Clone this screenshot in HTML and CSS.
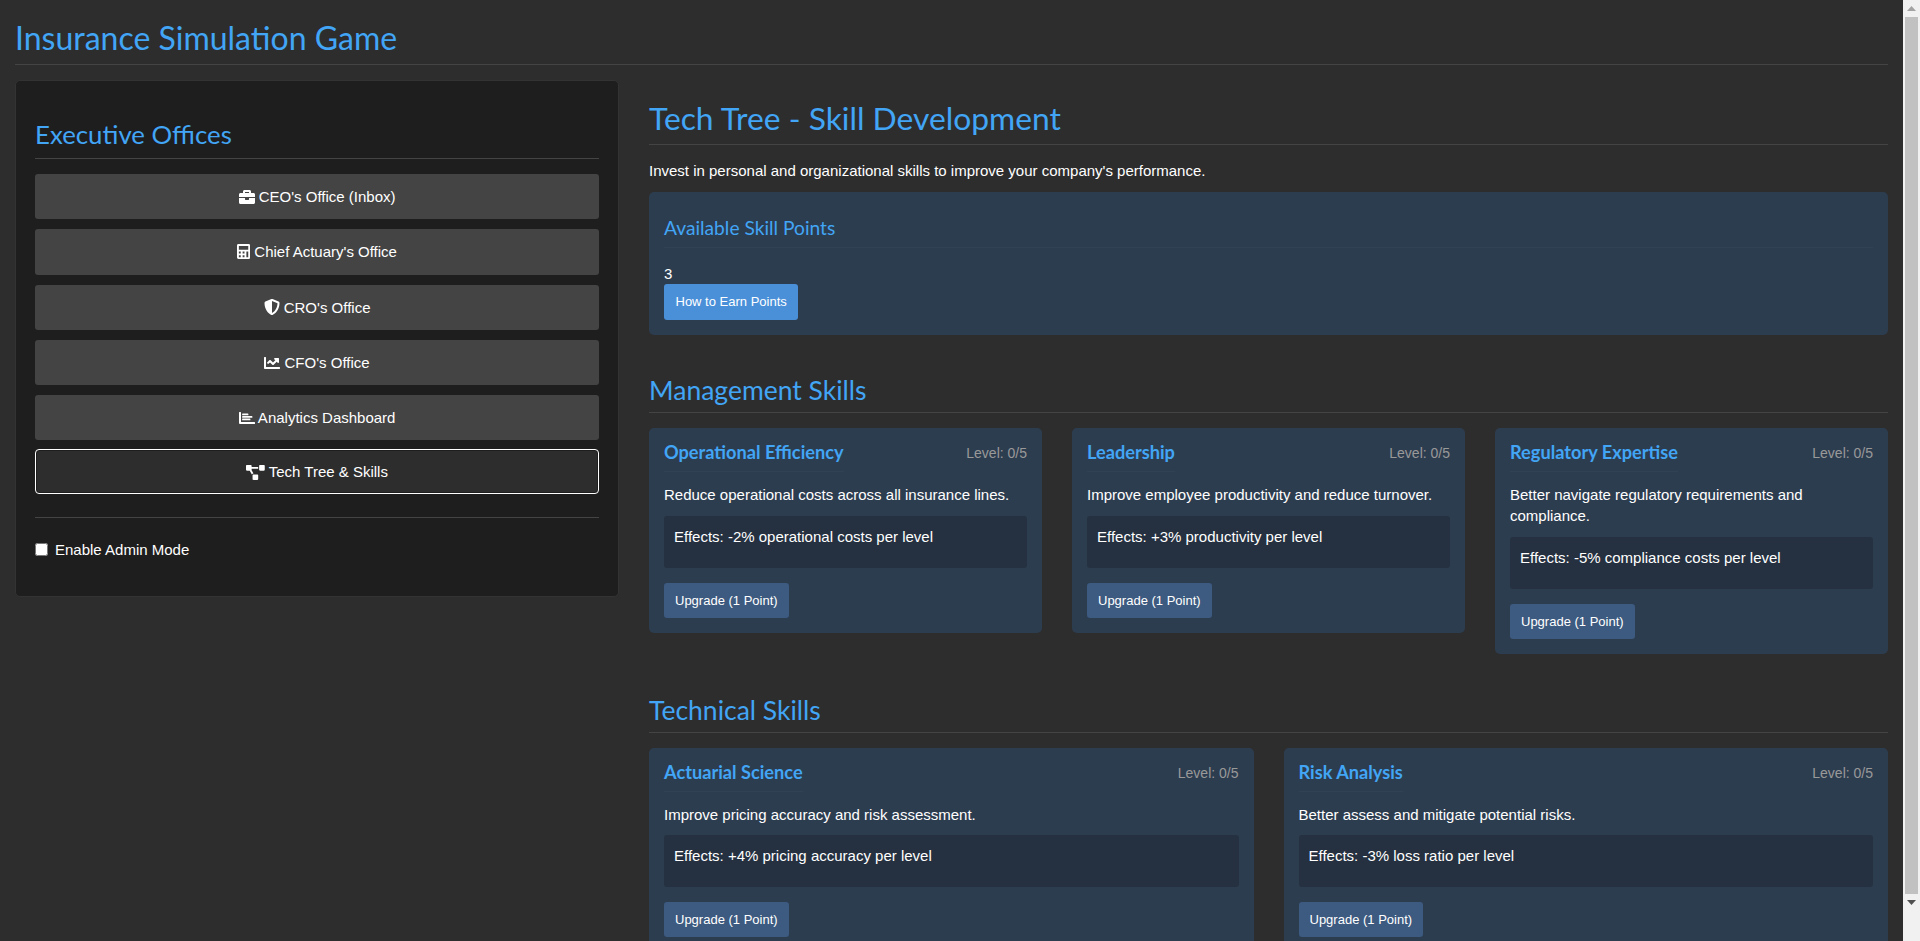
FILE: index.html
```html
<!DOCTYPE html>
<html>
<head>
    <title>Insurance Simulation Game</title>
    <link rel="stylesheet" href="styles.css">
</head>
<body>
    <h1 class="game-title">Insurance Simulation Game</h1>
    <div class="layout">
        <div class="sidebar">
            <h2 class="sidebar-title">Executive Offices</h2>
            <button class="office-btn">
                <svg class="icon" viewBox="0 0 512 512"><path d="M320 336c0 8.84-7.16 16-16 16h-96c-8.84 0-16-7.16-16-16v-48H0v144c0 25.6 22.4 48 48 48h416c25.6 0 48-22.4 48-48V288H320v48zm144-208h-80V80c0-25.6-22.4-48-48-48H176c-25.6 0-48 22.4-48 48v48H48c-25.6 0-48 22.4-48 48v80h512v-80c0-25.6-22.4-48-48-48zm-144 0H192V96h128v32z"/></svg>
                CEO's Office (Inbox)
            </button>
            <button class="office-btn">
                <svg class="icon tall" viewBox="0 0 448 512"><path fill-rule="evenodd" d="M48 0h352a48 48 0 0 1 48 48v416a48 48 0 0 1-48 48H48a48 48 0 0 1-48-48V48A48 48 0 0 1 48 0zm16 64v128h320V64zm0 192v64h64v-64zm128 0v64h64v-64zm128 0v192h64V256zM64 384v64h64v-64zm128 0v64h64v-64z"/></svg>
                Chief Actuary's Office
            </button>
            <button class="office-btn">
                <svg class="icon" viewBox="0 0 512 512"><path d="M466.5 83.7l-192-80a48.15 48.15 0 0 0-36.9 0l-192 80C27.7 91.1 16 108.6 16 128c0 198.5 114.5 335.7 221.5 380.3 11.8 4.9 25.1 4.9 36.9 0C360.1 472.6 496 349.3 496 128c0-19.4-11.7-36.9-29.5-44.3zM256.1 446.3l-.1-381 175.9 73.3c-3.3 151.4-82.1 261.1-175.8 307.7z"/></svg>
                CRO's Office
            </button>
            <button class="office-btn">
                <svg class="icon" viewBox="0 0 512 512"><path d="M496 384H64V80c0-8.84-7.16-16-16-16H16C7.16 64 0 71.16 0 80v336c0 17.67 14.33 32 32 32h464c8.84 0 16-7.16 16-16v-32c0-8.84-7.16-16-16-16zM464 96H345.94c-21.38 0-32.09 25.85-16.97 40.97l32.4 32.4L288 242.75l-73.37-73.37c-12.5-12.5-32.76-12.5-45.25 0l-68.69 68.69c-6.25 6.25-6.25 16.38 0 22.63l22.62 22.62c6.25 6.25 16.38 6.25 22.63 0L192 237.25l73.37 73.37c12.5 12.5 32.76 12.5 45.25 0l96-96 32.4 32.4c15.12 15.12 40.97 4.41 40.97-16.97V112c.01-8.84-7.15-16-16-16z"/></svg>
                CFO's Office
            </button>
            <button class="office-btn">
                <svg class="icon" viewBox="0 0 512 512"><path d="M16 64h32a16 16 0 0 1 16 16v304h432a16 16 0 0 1 16 16v32a16 16 0 0 1-16 16H32a32 32 0 0 1-32-32V80a16 16 0 0 1 16-16zM112 112h176a12 12 0 0 1 12 12v32a12 12 0 0 1-12 12H112a12 12 0 0 1-12-12v-32a12 12 0 0 1 12-12zm0 80h304a12 12 0 0 1 12 12v32a12 12 0 0 1-12 12H112a12 12 0 0 1-12-12v-32a12 12 0 0 1 12-12zm0 80h240a12 12 0 0 1 12 12v32a12 12 0 0 1-12 12H112a12 12 0 0 1-12-12v-32a12 12 0 0 1 12-12z"/></svg>
                Analytics Dashboard
            </button>
            <button class="office-btn active">
                <svg class="icon wide" viewBox="0 0 640 512"><path d="M384 320H256c-17.67 0-32 14.33-32 32v128c0 17.67 14.33 32 32 32h128c17.67 0 32-14.33 32-32V352c0-17.67-14.33-32-32-32zM192 32c0-17.67-14.33-32-32-32H32C14.33 0 0 14.33 0 32v128c0 17.67 14.33 32 32 32h95.72l73.16 128.04C211.98 300.98 232.4 288 256 288h.28L192 175.51V128h224V64H192V32zM608 0H480c-17.67 0-32 14.33-32 32v128c0 17.67 14.33 32 32 32h128c17.67 0 32-14.33 32-32V32c0-17.67-14.33-32-32-32z"/></svg>
                Tech Tree &amp; Skills
            </button>
            <hr class="sidebar-rule">
            <label class="admin-toggle"><input type="checkbox"> Enable Admin Mode</label>
        </div>

        <div class="main">
            <h2 class="page-title">Tech Tree - Skill Development</h2>
            <p class="intro">Invest in personal and organizational skills to improve your company's performance.</p>

            <div class="points-panel">
                <h3 class="points-title">Available Skill Points</h3>
                <div class="points-value">3</div>
                <button class="earn-btn">How to Earn Points</button>
            </div>

            <h3 class="section-title">Management Skills</h3>
            <div class="skill-grid three">
                <div class="skill-card">
                    <div class="skill-head">
                        <h4 class="skill-name">Operational Efficiency</h4>
                        <span class="skill-level">Level: 0/5</span>
                    </div>
                    <p class="skill-desc">Reduce operational costs across all insurance lines.</p>
                    <div class="skill-effects">Effects: -2% operational costs per level</div>
                    <button class="upgrade-btn">Upgrade (1 Point)</button>
                </div>
                <div class="skill-card">
                    <div class="skill-head">
                        <h4 class="skill-name">Leadership</h4>
                        <span class="skill-level">Level: 0/5</span>
                    </div>
                    <p class="skill-desc">Improve employee productivity and reduce turnover.</p>
                    <div class="skill-effects">Effects: +3% productivity per level</div>
                    <button class="upgrade-btn">Upgrade (1 Point)</button>
                </div>
                <div class="skill-card">
                    <div class="skill-head">
                        <h4 class="skill-name">Regulatory Expertise</h4>
                        <span class="skill-level">Level: 0/5</span>
                    </div>
                    <p class="skill-desc">Better navigate regulatory requirements and compliance.</p>
                    <div class="skill-effects">Effects: -5% compliance costs per level</div>
                    <button class="upgrade-btn">Upgrade (1 Point)</button>
                </div>
            </div>

            <h3 class="section-title">Technical Skills</h3>
            <div class="skill-grid two">
                <div class="skill-card">
                    <div class="skill-head">
                        <h4 class="skill-name">Actuarial Science</h4>
                        <span class="skill-level">Level: 0/5</span>
                    </div>
                    <p class="skill-desc">Improve pricing accuracy and risk assessment.</p>
                    <div class="skill-effects">Effects: +4% pricing accuracy per level</div>
                    <button class="upgrade-btn">Upgrade (1 Point)</button>
                </div>
                <div class="skill-card">
                    <div class="skill-head">
                        <h4 class="skill-name">Risk Analysis</h4>
                        <span class="skill-level">Level: 0/5</span>
                    </div>
                    <p class="skill-desc">Better assess and mitigate potential risks.</p>
                    <div class="skill-effects">Effects: -3% loss ratio per level</div>
                    <button class="upgrade-btn">Upgrade (1 Point)</button>
                </div>
            </div>
        </div>
    </div>

    <!-- Window scrollbar -->
    <div class="scrollbar">
        <svg class="scroll-arrow" width="9" height="5" viewBox="0 0 9 5"><path fill="#a3a3a3" d="M4.5 0L9 5H0z"/></svg>
        <div class="scroll-thumb"></div>
        <svg class="scroll-arrow" width="9" height="5" viewBox="0 0 9 5"><path fill="#505050" d="M0 0h9L4.5 5z"/></svg>
    </div>
</body>
</html>
```

FILE: styles.css
```css
html {
    height: 100%;
    overflow: hidden;
}
body {
    margin: 0;
    padding: 20px 32px 20px 15px;
    background-color: #2d2d2d;
    color: #fff;
    font-family: "Liberation Sans", Arial, sans-serif;
    font-size: 15px;
    line-height: 21px;
}
h1, h2, h3, h4 {
    margin: 0;
    font-family: Lato, "Liberation Sans", sans-serif;
    font-weight: 400;
    color: #42a5f5;
}
button {
    font-family: "Liberation Sans", Arial, sans-serif;
    color: #fff;
    border: none;
    border-radius: 3px;
    cursor: pointer;
}

/* Scrollbar */
.scrollbar {
    position: fixed;
    top: 0;
    right: 0;
    bottom: 0;
    width: 17px;
    display: flex;
    flex-direction: column;
    align-items: center;
    background-color: #f1f1f1;
}
.scroll-arrow {
    flex: none;
    margin: 6px 0;
}
.scroll-thumb {
    width: 13px;
    height: 877px;
    background-color: #c1c1c1;
}

.game-title {
    font-size: 32px;
    line-height: 36px;
    padding-bottom: 8px;
    border-bottom: 1px solid #444;
    margin-bottom: 15px;
}
.layout {
    display: grid;
    grid-template-columns: 604px 1fr;
    gap: 30px;
    align-items: start;
}

/* Sidebar */
.sidebar {
    background-color: #1e1e1e;
    border: 1px solid #333;
    border-radius: 5px;
    padding: 38px 19px 36px;
}
.sidebar-title {
    font-size: 25.8px;
    line-height: 30px;
    padding-bottom: 9px;
    border-bottom: 1px solid #444;
    margin-bottom: 15px;
}
.office-btn {
    display: block;
    width: 100%;
    height: 45.3px;
    margin-bottom: 10px;
    background-color: #444;
    font-size: 15px;
}
.office-btn.active {
    height: 45px;
    margin-top: -1px;
    background-color: #2d2d2d;
    border: 1px solid #fff;
    border-radius: 4px;
    box-shadow: inset 0 0 0 1px #1e1e1e;
}
.icon {
    height: 16px;
    fill: currentColor;
    vertical-align: -2.5px;
}
.icon.wide {
    height: 15px;
}
.icon.tall {
    height: 15px;
    vertical-align: -2px;
}
.sidebar-rule {
    border: none;
    border-top: 1px solid #444;
    margin: 23px 0 21px;
}
.admin-toggle {
    display: flex;
    align-items: center;
    gap: 7px;
    height: 21px;
}
.admin-toggle input {
    margin: 0;
    width: 13px;
    height: 13px;
}

/* Main column */
.page-title {
    font-size: 31.8px;
    line-height: 35px;
    margin-top: 21px;
    padding-bottom: 8px;
    border-bottom: 1px solid #444;
    margin-bottom: 15px;
}
.intro {
    margin: 0 0 11px;
}
.points-panel {
    background-color: #2d3d50;
    border-radius: 5px;
    padding: 15px;
    margin-bottom: 40px;
}
.points-title {
    font-size: 19.2px;
    line-height: 24px;
    margin-top: 9px;
    padding-bottom: 7px;
    border-bottom: 1px solid #304254;
    margin-bottom: 15px;
}
.earn-btn {
    display: block;
    height: 36px;
    padding: 0 11.5px 1px;
    background-color: #4a90d9;
    font-size: 13px;
}
.section-title {
    font-size: 26.5px;
    line-height: 30px;
    padding-bottom: 7px;
    border-bottom: 1px solid #444;
    margin-bottom: 15px;
}
.skill-grid {
    display: grid;
    gap: 30px;
    align-items: start;
    margin-bottom: 41px;
}
.skill-grid.three {
    grid-template-columns: repeat(3, 1fr);
}
.skill-grid.two {
    grid-template-columns: repeat(2, 1fr);
    margin-bottom: 0;
}
.skill-card {
    background-color: #2d3d50;
    border-radius: 5px;
    padding: 15px;
}
.skill-head {
    display: flex;
    justify-content: space-between;
    align-items: flex-start;
    margin-bottom: 12px;
}
.skill-name {
    font-size: 18.2px;
    font-weight: 700;
    line-height: 19px;
    padding-bottom: 9px;
    border-bottom: 1px solid #304254;
}
.skill-level {
    font-size: 14px;
    line-height: 20px;
    color: #999;
}
.skill-desc {
    margin: 0 0 11px;
}
.two .skill-desc {
    margin-bottom: 10px;
}
.skill-effects {
    background-color: #253140;
    border-radius: 3px;
    padding: 10px 10px 21px;
    margin-bottom: 15px;
}
.upgrade-btn {
    display: block;
    height: 35px;
    padding: 0 11px;
    background-color: #3d5a80;
    font-size: 13px;
}
```
